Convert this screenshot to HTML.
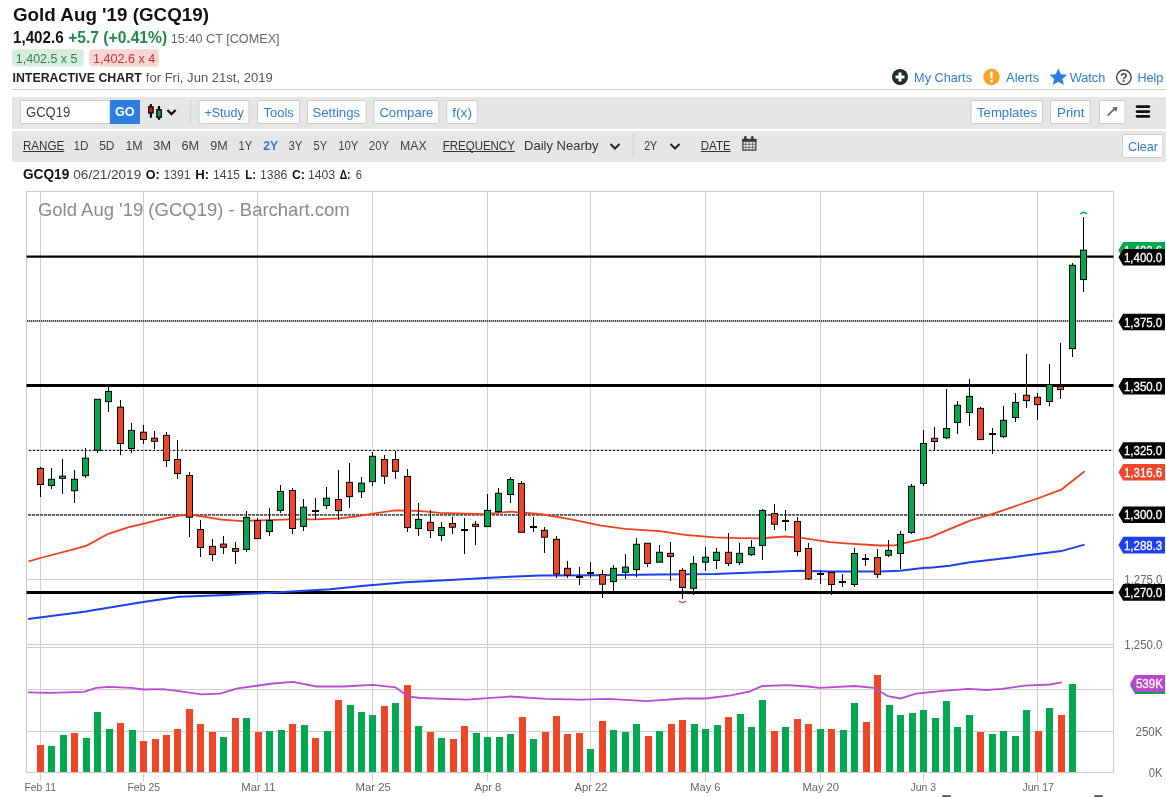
<!DOCTYPE html>
<html><head><meta charset="utf-8"><title>Gold Aug '19 (GCQ19)</title>
<style>
html,body{margin:0;padding:0;background:#fff;width:1166px;height:797px;overflow:hidden;}
svg{display:block;font-family:"Liberation Sans", sans-serif;will-change:transform;}
</style></head><body>
<svg width="1166" height="797" viewBox="0 0 1166 797">
<text x="13" y="20.7" font-size="19" fill="#111" font-weight="bold" textLength="196.0" lengthAdjust="spacingAndGlyphs">Gold Aug &#x27;19 (GCQ19)</text>
<text x="13" y="42.8" font-size="16" fill="#111" font-weight="bold" textLength="50.7" lengthAdjust="spacingAndGlyphs">1,402.6</text>
<text x="68.2" y="42.8" font-size="16" fill="#1e8a44" font-weight="bold" textLength="98.9" lengthAdjust="spacingAndGlyphs">+5.7 (+0.41%)</text>
<text x="170.8" y="42.5" font-size="13" fill="#666" textLength="108.8" lengthAdjust="spacingAndGlyphs">15:40 CT [COMEX]</text>
<rect x="12" y="49.2" width="71.7" height="17.4" fill="#d8ebdf" rx="3"/>
<text x="15.8" y="63" font-size="12.5" fill="#2e8b50" textLength="61.7" lengthAdjust="spacingAndGlyphs">1,402.5 x 5</text>
<rect x="89.2" y="49.2" width="69.5" height="17.4" fill="#f7d6d6" rx="3"/>
<text x="93.1" y="63" font-size="12.5" fill="#d0302a" textLength="62.1" lengthAdjust="spacingAndGlyphs">1,402.6 x 4</text>
<text x="12.5" y="82" font-size="12.3" fill="#222" font-weight="bold" textLength="129.2" lengthAdjust="spacingAndGlyphs">INTERACTIVE CHART</text>
<text x="145.8" y="82" font-size="13" fill="#555" textLength="126.9" lengthAdjust="spacingAndGlyphs">for Fri, Jun 21st, 2019</text>
<circle cx="900" cy="77" r="8" fill="#1f2e2b"/>
<rect x="895.5" y="75.5" width="9" height="3" fill="#fff"/>
<rect x="898.5" y="72.5" width="3" height="9" fill="#fff"/>
<text x="914.1" y="82.4" font-size="13" fill="#2f7bd6" textLength="57.9" lengthAdjust="spacingAndGlyphs">My Charts</text>
<circle cx="991.5" cy="77" r="8.2" fill="#f5a623"/>
<rect x="990.3" y="71.5" width="2.4" height="7" fill="#fff"/>
<rect x="990.3" y="80" width="2.4" height="2.4" fill="#fff"/>
<text x="1006.1" y="82.4" font-size="13" fill="#2f7bd6" textLength="33.1" lengthAdjust="spacingAndGlyphs">Alerts</text>
<path d="M1058.3,68.5 L1060.9,74.3 L1067,74.8 L1062.4,78.9 L1063.8,84.8 L1058.3,81.7 L1052.8,84.8 L1054.2,78.9 L1049.6,74.8 L1055.7,74.3 Z" fill="#2a7de1"/>
<text x="1069.7" y="82.4" font-size="13" fill="#2f7bd6" textLength="35.6" lengthAdjust="spacingAndGlyphs">Watch</text>
<circle cx="1123.9" cy="77.3" r="7.3" fill="none" stroke="#444" stroke-width="1.4"/>
<text x="1123.9" y="81.6" font-size="12.5" fill="#444" font-weight="bold" text-anchor="middle">?</text>
<text x="1137.4" y="82.4" font-size="13" fill="#2f7bd6" textLength="26.0" lengthAdjust="spacingAndGlyphs">Help</text>
<line x1="12" y1="89.5" x2="1166" y2="89.5" stroke="#cfcfcf" stroke-width="1"/>
<rect x="12" y="97" width="1154" height="32" fill="#e6e6e6"/>
<rect x="20.5" y="100.5" width="89.5" height="23" fill="#fff" stroke="#cfcfcf" stroke-width="1"/>
<text x="26" y="116.9" font-size="14.3" fill="#444" textLength="44.3" lengthAdjust="spacingAndGlyphs">GCQ19</text>
<rect x="110" y="100" width="30" height="24" fill="#2b7de0"/>
<text x="114.9" y="116" font-size="13" fill="#fff" font-weight="bold" textLength="19.7" lengthAdjust="spacingAndGlyphs">GO</text>
<line x1="150.9" y1="104.1" x2="150.9" y2="117.8" stroke="#111" stroke-width="2.2"/>
<rect x="148.7" y="106.9" width="4.4" height="6" fill="#c0221e" stroke="#111" stroke-width="1.4"/>
<line x1="159" y1="106" x2="159" y2="119.8" stroke="#111" stroke-width="2.2"/>
<rect x="156.8" y="109.8" width="4.5" height="7.5" fill="#17974a" stroke="#111" stroke-width="1.4"/>
<path d="M167.4,110 L171.5,114.2 L175.6,110" fill="none" stroke="#111" stroke-width="2.3"/>
<line x1="190.5" y1="100" x2="190.5" y2="124" stroke="#c8c8c8" stroke-width="1" stroke-dasharray="2,1"/>
<rect x="199.0" y="100.5" width="50.0" height="23" fill="#fff" stroke="#cfcfcf" stroke-width="1" rx="1.5"/>
<text x="204.4" y="117.1" font-size="13.7" fill="#2f7bd6" textLength="39.4" lengthAdjust="spacingAndGlyphs">+Study</text>
<rect x="257.5" y="100.5" width="42" height="23" fill="#fff" stroke="#cfcfcf" stroke-width="1" rx="1.5"/>
<text x="263.6" y="117.1" font-size="13.7" fill="#2f7bd6" textLength="30.1" lengthAdjust="spacingAndGlyphs">Tools</text>
<rect x="307.5" y="100.5" width="58.5" height="23" fill="#fff" stroke="#cfcfcf" stroke-width="1" rx="1.5"/>
<text x="312.5" y="117.1" font-size="13.7" fill="#2f7bd6" textLength="47.6" lengthAdjust="spacingAndGlyphs">Settings</text>
<rect x="374.0" y="100.5" width="64.80000000000001" height="23" fill="#fff" stroke="#cfcfcf" stroke-width="1" rx="1.5"/>
<text x="379.4" y="117.1" font-size="13.7" fill="#2f7bd6" textLength="54.0" lengthAdjust="spacingAndGlyphs">Compare</text>
<rect x="446.7" y="100.5" width="30.600000000000023" height="23" fill="#fff" stroke="#cfcfcf" stroke-width="1" rx="1.5"/>
<text x="452.2" y="117.1" font-size="13.7" fill="#2f7bd6" textLength="19.8" lengthAdjust="spacingAndGlyphs">f(x)</text>
<rect x="971.0" y="100.5" width="71.5" height="23" fill="#fff" stroke="#cfcfcf" stroke-width="1" rx="1.5"/>
<text x="977" y="117.1" font-size="13.7" fill="#2f7bd6" textLength="60.0" lengthAdjust="spacingAndGlyphs">Templates</text>
<rect x="1050.5" y="100.5" width="39.5" height="23" fill="#fff" stroke="#cfcfcf" stroke-width="1" rx="1.5"/>
<text x="1057" y="117.1" font-size="13.7" fill="#2f7bd6" textLength="27.4" lengthAdjust="spacingAndGlyphs">Print</text>
<rect x="1099.5" y="100.5" width="25.5" height="23" fill="#fff" stroke="#cfcfcf" stroke-width="1" rx="1.5"/>
<path d="M1107.6,115.6 L1114.6,108.6" fill="none" stroke="#666" stroke-width="1.7"/>
<path d="M1117.4,106.8 L1112.2,107.6 L1116.6,112 Z" fill="#666"/>
<line x1="1137" y1="106.6" x2="1148.9" y2="106.6" stroke="#111" stroke-width="2.6" stroke-linecap="round"/>
<line x1="1137" y1="111.6" x2="1148.9" y2="111.6" stroke="#111" stroke-width="2.6" stroke-linecap="round"/>
<line x1="1137" y1="116.4" x2="1148.9" y2="116.4" stroke="#111" stroke-width="2.6" stroke-linecap="round"/>
<rect x="12" y="131" width="1154" height="31" fill="#e6e6e6"/>
<text x="22.9" y="150.2" font-size="13" fill="#333" textLength="41.3" lengthAdjust="spacingAndGlyphs">RANGE</text>
<line x1="22.9" y1="151.5" x2="64.2" y2="151.5" stroke="#333" stroke-width="1"/>
<text x="73.4" y="150.2" font-size="13" fill="#444" textLength="15.1" lengthAdjust="spacingAndGlyphs">1D</text>
<text x="99.2" y="150.2" font-size="13" fill="#444" textLength="15.2" lengthAdjust="spacingAndGlyphs">5D</text>
<text x="125.4" y="150.2" font-size="13" fill="#444" textLength="17.3" lengthAdjust="spacingAndGlyphs">1M</text>
<text x="153.1" y="150.2" font-size="13" fill="#444" textLength="18.0" lengthAdjust="spacingAndGlyphs">3M</text>
<text x="181.5" y="150.2" font-size="13" fill="#444" textLength="17.7" lengthAdjust="spacingAndGlyphs">6M</text>
<text x="210.2" y="150.2" font-size="13" fill="#444" textLength="17.4" lengthAdjust="spacingAndGlyphs">9M</text>
<text x="238.6" y="150.2" font-size="13" fill="#444" textLength="13.7" lengthAdjust="spacingAndGlyphs">1Y</text>
<text x="263.3" y="150.2" font-size="13" fill="#2f7bd6" font-weight="bold" textLength="14.8" lengthAdjust="spacingAndGlyphs">2Y</text>
<text x="288.4" y="150.2" font-size="13" fill="#444" textLength="14.0" lengthAdjust="spacingAndGlyphs">3Y</text>
<text x="313.5" y="150.2" font-size="13" fill="#444" textLength="13.6" lengthAdjust="spacingAndGlyphs">5Y</text>
<text x="338.2" y="150.2" font-size="13" fill="#444" textLength="20.3" lengthAdjust="spacingAndGlyphs">10Y</text>
<text x="368.8" y="150.2" font-size="13" fill="#444" textLength="20.3" lengthAdjust="spacingAndGlyphs">20Y</text>
<text x="400.1" y="150.2" font-size="13" fill="#444" textLength="26.6" lengthAdjust="spacingAndGlyphs">MAX</text>
<text x="442.8" y="150.2" font-size="13" fill="#333" textLength="72.0" lengthAdjust="spacingAndGlyphs">FREQUENCY</text>
<line x1="442.8" y1="151.5" x2="514.8" y2="151.5" stroke="#333" stroke-width="1"/>
<text x="524.1" y="150.2" font-size="13" fill="#333" textLength="74.4" lengthAdjust="spacingAndGlyphs">Daily Nearby</text>
<text x="644.2" y="150.2" font-size="13" fill="#333" textLength="13.0" lengthAdjust="spacingAndGlyphs">2Y</text>
<text x="700.8" y="150.2" font-size="13" fill="#333" textLength="29.8" lengthAdjust="spacingAndGlyphs">DATE</text>
<line x1="700.8" y1="151.5" x2="730.6" y2="151.5" stroke="#333" stroke-width="1"/>
<path d="M610.5,144 L615,148.5 L619.5,144" fill="none" stroke="#222" stroke-width="2"/>
<path d="M670.5,144 L675,148.5 L679.5,144" fill="none" stroke="#222" stroke-width="2"/>
<line x1="633.5" y1="134" x2="633.5" y2="158" stroke="#c8c8c8" stroke-width="1" stroke-dasharray="2,1"/>
<rect x="742.9" y="139.5" width="12.9" height="10.6" fill="none" stroke="#333" stroke-width="1.2"/>
<rect x="742.3" y="138.9" width="14.1" height="2.9" fill="#333"/>
<line x1="745.7" y1="141" x2="745.7" y2="150" stroke="#666" stroke-width="0.8"/>
<line x1="749.2" y1="141" x2="749.2" y2="150" stroke="#666" stroke-width="0.8"/>
<line x1="752.5" y1="141" x2="752.5" y2="150" stroke="#666" stroke-width="0.8"/>
<line x1="743" y1="144.3" x2="755.6" y2="144.3" stroke="#666" stroke-width="0.8"/>
<line x1="743" y1="147.4" x2="755.6" y2="147.4" stroke="#666" stroke-width="0.8"/>
<rect x="744.2" y="136.1" width="2.4" height="3.8" rx="1" fill="#333"/>
<rect x="751.1" y="136.1" width="2.4" height="3.8" rx="1" fill="#333"/>
<rect x="1122.5" y="134.5" width="40.5" height="23" fill="#fff" stroke="#cfcfcf" stroke-width="1" rx="1.5"/>
<text x="1128" y="150.9" font-size="13" fill="#2f7bd6" textLength="30.0" lengthAdjust="spacingAndGlyphs">Clear</text>
<text x="23" y="178.7" font-size="14.8" fill="#111" font-weight="bold" textLength="46.3" lengthAdjust="spacingAndGlyphs">GCQ19</text>
<text x="73.3" y="178.7" font-size="13" fill="#444" textLength="67.9" lengthAdjust="spacingAndGlyphs">06/21/2019</text>
<text x="145.8" y="178.7" font-size="13" fill="#111" font-weight="bold" textLength="13.9" lengthAdjust="spacingAndGlyphs">O:</text>
<text x="163.4" y="178.7" font-size="13" fill="#444" textLength="27.2" lengthAdjust="spacingAndGlyphs">1391</text>
<text x="195.2" y="178.7" font-size="13" fill="#111" font-weight="bold" textLength="13.9" lengthAdjust="spacingAndGlyphs">H:</text>
<text x="213.1" y="178.7" font-size="13" fill="#444" textLength="26.9" lengthAdjust="spacingAndGlyphs">1415</text>
<text x="245.3" y="178.7" font-size="13" fill="#111" font-weight="bold" textLength="10.8" lengthAdjust="spacingAndGlyphs">L:</text>
<text x="260.1" y="178.7" font-size="13" fill="#444" textLength="27.1" lengthAdjust="spacingAndGlyphs">1386</text>
<text x="291.9" y="178.7" font-size="13" fill="#111" font-weight="bold" textLength="12.9" lengthAdjust="spacingAndGlyphs">C:</text>
<text x="307.9" y="178.7" font-size="13" fill="#444" textLength="27.2" lengthAdjust="spacingAndGlyphs">1403</text>
<text x="339.7" y="178.7" font-size="13" fill="#111" font-weight="bold" textLength="10.8" lengthAdjust="spacingAndGlyphs">Δ:</text>
<text x="355.8" y="178.7" font-size="13" fill="#444" textLength="6.2" lengthAdjust="spacingAndGlyphs">6</text>
<rect x="26.5" y="191.5" width="1087.0" height="581.0" fill="#fff" stroke="#cccccc" stroke-width="1"/>
<line x1="40.5" y1="191.5" x2="40.5" y2="781.5" stroke="#cfcfcf" stroke-width="1"/>
<line x1="143.5" y1="191.5" x2="143.5" y2="781.5" stroke="#cfcfcf" stroke-width="1"/>
<line x1="257.5" y1="191.5" x2="257.5" y2="781.5" stroke="#cfcfcf" stroke-width="1"/>
<line x1="372.5" y1="191.5" x2="372.5" y2="781.5" stroke="#cfcfcf" stroke-width="1"/>
<line x1="487.5" y1="191.5" x2="487.5" y2="781.5" stroke="#cfcfcf" stroke-width="1"/>
<line x1="590.5" y1="191.5" x2="590.5" y2="781.5" stroke="#cfcfcf" stroke-width="1"/>
<line x1="705.5" y1="191.5" x2="705.5" y2="781.5" stroke="#cfcfcf" stroke-width="1"/>
<line x1="820.5" y1="191.5" x2="820.5" y2="781.5" stroke="#cfcfcf" stroke-width="1"/>
<line x1="923.5" y1="191.5" x2="923.5" y2="781.5" stroke="#cfcfcf" stroke-width="1"/>
<line x1="1037.5" y1="191.5" x2="1037.5" y2="781.5" stroke="#cfcfcf" stroke-width="1"/>
<line x1="26.5" y1="579.5" x2="1113.5" y2="579.5" stroke="#cfcfcf" stroke-width="1"/>
<line x1="26.5" y1="644.5" x2="1113.5" y2="644.5" stroke="#cfcfcf" stroke-width="1"/>
<line x1="26.5" y1="647.5" x2="1113.5" y2="647.5" stroke="#cfcfcf" stroke-width="1"/>
<line x1="26.5" y1="689.5" x2="1113.5" y2="689.5" stroke="#cfcfcf" stroke-width="1"/>
<line x1="26.5" y1="731.5" x2="1113.5" y2="731.5" stroke="#cfcfcf" stroke-width="1"/>
<text x="37.9" y="216.4" font-size="18.5" fill="#8a8a8a" textLength="311.9" lengthAdjust="spacingAndGlyphs">Gold Aug &#x27;19 (GCQ19) - Barchart.com</text>
<rect x="37" y="745" width="7" height="27" fill="#ee4727"/>
<rect x="48" y="746" width="7" height="26" fill="#00a84f"/>
<rect x="60" y="735" width="7" height="37" fill="#00a84f"/>
<rect x="71" y="733" width="7" height="39" fill="#ee4727"/>
<rect x="83" y="738" width="7" height="34" fill="#00a84f"/>
<rect x="94" y="712" width="7" height="60" fill="#00a84f"/>
<rect x="106" y="729" width="7" height="43" fill="#00a84f"/>
<rect x="117" y="723" width="7" height="49" fill="#ee4727"/>
<rect x="129" y="730" width="7" height="42" fill="#00a84f"/>
<rect x="140" y="741" width="7" height="31" fill="#ee4727"/>
<rect x="152" y="739" width="7" height="33" fill="#ee4727"/>
<rect x="163" y="735" width="7" height="37" fill="#ee4727"/>
<rect x="174" y="729" width="7" height="43" fill="#ee4727"/>
<rect x="186" y="709" width="7" height="63" fill="#ee4727"/>
<rect x="197" y="724" width="7" height="48" fill="#ee4727"/>
<rect x="209" y="732" width="7" height="40" fill="#ee4727"/>
<rect x="220" y="737" width="7" height="35" fill="#00a84f"/>
<rect x="232" y="718" width="7" height="54" fill="#ee4727"/>
<rect x="243" y="718" width="7" height="54" fill="#00a84f"/>
<rect x="255" y="732" width="7" height="40" fill="#ee4727"/>
<rect x="266" y="731" width="7" height="41" fill="#00a84f"/>
<rect x="278" y="730" width="7" height="42" fill="#00a84f"/>
<rect x="289" y="724" width="7" height="48" fill="#ee4727"/>
<rect x="301" y="725" width="7" height="47" fill="#00a84f"/>
<rect x="312" y="738" width="7" height="34" fill="#ee4727"/>
<rect x="324" y="731" width="7" height="41" fill="#00a84f"/>
<rect x="335" y="700" width="7" height="72" fill="#ee4727"/>
<rect x="347" y="705" width="7" height="67" fill="#00a84f"/>
<rect x="358" y="712" width="7" height="60" fill="#00a84f"/>
<rect x="369" y="715" width="7" height="57" fill="#00a84f"/>
<rect x="381" y="706" width="7" height="66" fill="#ee4727"/>
<rect x="392" y="703" width="7" height="69" fill="#00a84f"/>
<rect x="404" y="685" width="7" height="87" fill="#ee4727"/>
<rect x="415" y="726" width="7" height="46" fill="#00a84f"/>
<rect x="427" y="732" width="7" height="40" fill="#ee4727"/>
<rect x="438" y="738" width="7" height="34" fill="#00a84f"/>
<rect x="450" y="739" width="7" height="33" fill="#ee4727"/>
<rect x="461" y="726" width="7" height="46" fill="#ee4727"/>
<rect x="473" y="733" width="7" height="39" fill="#00a84f"/>
<rect x="484" y="737" width="7" height="35" fill="#00a84f"/>
<rect x="496" y="737" width="7" height="35" fill="#00a84f"/>
<rect x="507" y="734" width="7" height="38" fill="#00a84f"/>
<rect x="519" y="717" width="7" height="55" fill="#ee4727"/>
<rect x="530" y="739" width="7" height="33" fill="#00a84f"/>
<rect x="542" y="732" width="7" height="40" fill="#ee4727"/>
<rect x="553" y="716" width="7" height="56" fill="#ee4727"/>
<rect x="564" y="734" width="7" height="38" fill="#ee4727"/>
<rect x="576" y="733" width="7" height="39" fill="#ee4727"/>
<rect x="587" y="749" width="7" height="23" fill="#00a84f"/>
<rect x="599" y="721" width="7" height="51" fill="#ee4727"/>
<rect x="610" y="730" width="7" height="42" fill="#00a84f"/>
<rect x="622" y="732" width="7" height="40" fill="#00a84f"/>
<rect x="633" y="724" width="7" height="48" fill="#00a84f"/>
<rect x="645" y="736" width="7" height="36" fill="#ee4727"/>
<rect x="656" y="731" width="7" height="41" fill="#00a84f"/>
<rect x="668" y="724" width="7" height="48" fill="#ee4727"/>
<rect x="679" y="720" width="7" height="52" fill="#ee4727"/>
<rect x="691" y="724" width="7" height="48" fill="#00a84f"/>
<rect x="702" y="729" width="7" height="43" fill="#00a84f"/>
<rect x="714" y="725" width="7" height="47" fill="#00a84f"/>
<rect x="725" y="717" width="7" height="55" fill="#ee4727"/>
<rect x="737" y="714" width="7" height="58" fill="#00a84f"/>
<rect x="748" y="727" width="7" height="45" fill="#00a84f"/>
<rect x="759" y="700" width="7" height="72" fill="#00a84f"/>
<rect x="771" y="731" width="7" height="41" fill="#ee4727"/>
<rect x="782" y="727" width="7" height="45" fill="#00a84f"/>
<rect x="794" y="719" width="7" height="53" fill="#ee4727"/>
<rect x="805" y="724" width="7" height="48" fill="#ee4727"/>
<rect x="817" y="729" width="7" height="43" fill="#00a84f"/>
<rect x="828" y="729" width="7" height="43" fill="#ee4727"/>
<rect x="840" y="730" width="7" height="42" fill="#00a84f"/>
<rect x="851" y="703" width="7" height="69" fill="#00a84f"/>
<rect x="863" y="722" width="7" height="50" fill="#ee4727"/>
<rect x="874" y="675" width="7" height="97" fill="#ee4727"/>
<rect x="886" y="705" width="7" height="67" fill="#00a84f"/>
<rect x="897" y="715" width="7" height="57" fill="#00a84f"/>
<rect x="909" y="713" width="7" height="59" fill="#00a84f"/>
<rect x="920" y="710" width="7" height="62" fill="#00a84f"/>
<rect x="932" y="718" width="7" height="54" fill="#00a84f"/>
<rect x="943" y="701" width="7" height="71" fill="#00a84f"/>
<rect x="954" y="727" width="7" height="45" fill="#00a84f"/>
<rect x="966" y="715" width="7" height="57" fill="#00a84f"/>
<rect x="977" y="732" width="7" height="40" fill="#ee4727"/>
<rect x="989" y="734" width="7" height="38" fill="#00a84f"/>
<rect x="1000" y="731" width="7" height="41" fill="#00a84f"/>
<rect x="1012" y="736" width="7" height="36" fill="#00a84f"/>
<rect x="1023" y="710" width="7" height="62" fill="#00a84f"/>
<rect x="1035" y="731" width="7" height="41" fill="#ee4727"/>
<rect x="1046" y="708" width="7" height="64" fill="#00a84f"/>
<rect x="1058" y="715" width="7" height="57" fill="#ee4727"/>
<rect x="1069" y="684" width="7" height="88" fill="#00a84f"/>
<polyline fill="none" stroke="#b84dd0" stroke-width="1.8" points="28.0,692.3 50.6,692.9 84.0,691.8 96.2,687.8 108.5,686.9 131.4,687.9 143.6,689.5 163.0,689.2 177.0,690.9 201.6,694.4 220.0,693.6 237.6,688.3 255.1,686.0 272.7,683.5 292.9,681.8 316.6,686.5 342.9,686.5 372.8,684.8 395.6,687.4 407.9,696.5 420.0,698.0 466.7,699.7 510.6,696.5 545.7,698.8 580.8,699.7 608.0,698.8 646.6,701.1 683.5,698.5 705.5,698.5 731.0,695.3 750.2,691.3 762.2,686.0 787.1,685.1 808.0,686.5 819.6,687.8 854.7,686.0 874.0,687.8 888.0,696.2 900.3,698.5 916.1,693.6 942.5,690.9 968.8,688.8 986.4,690.0 1002.0,688.8 1024.7,685.6 1049.9,684.5 1061.8,682.4"/>
<line x1="26.5" y1="256.6" x2="1113.5" y2="256.6" stroke="#000" stroke-width="2.2"/>
<line x1="27" y1="321" x2="1113" y2="321" stroke="#c4c4c4" stroke-width="2"/>
<line x1="27" y1="321" x2="1113" y2="321" stroke="#4a4a4a" stroke-width="2" stroke-dasharray="1,1"/>
<line x1="26.5" y1="385.5" x2="1113.5" y2="385.5" stroke="#000" stroke-width="3"/>
<line x1="27" y1="450.5" x2="1113" y2="450.5" stroke="#c4c4c4" stroke-width="1"/>
<line x1="29" y1="450.4" x2="1113" y2="450.4" stroke="#222" stroke-width="1.3" stroke-dasharray="2,2"/>
<line x1="28" y1="515" x2="1113" y2="515" stroke="#e4e4e4" stroke-width="1.8"/>
<line x1="28" y1="514.9" x2="1113" y2="514.9" stroke="#555" stroke-width="1.7" stroke-dasharray="3,1"/>
<line x1="26.5" y1="592.5" x2="1113.5" y2="592.5" stroke="#000" stroke-width="3"/>
<polyline fill="none" stroke="#f0401e" stroke-width="1.8" points="28.5,561.3 40.4,558.0 73.3,549.3 86.7,545.6 108.3,533.8 128.9,527.2 146.0,523.2 159.6,519.7 180.3,515.4 193.4,515.0 221.6,519.7 242.3,521.2 250.0,520.7 290.0,519.4 315.0,519.4 340.0,518.3 355.0,516.6 370.0,514.2 395.0,510.4 418.0,510.9 440.0,512.9 485.0,514.2 510.0,511.6 540.0,514.0 570.0,519.2 600.0,525.4 625.0,528.8 660.0,531.1 685.0,534.8 715.0,537.3 740.0,538.1 760.0,538.4 785.0,536.5 800.0,537.6 830.0,542.2 845.0,543.4 880.0,545.5 895.0,545.3 915.0,540.6 930.0,537.3 949.6,529.1 970.0,520.6 992.0,514.1 1014.8,506.3 1037.5,498.5 1061.3,489.6 1084.6,471.2"/>
<polyline fill="none" stroke="#1f3ff2" stroke-width="2" points="28.0,619.0 86.0,611.5 90.0,610.8 143.2,601.9 179.2,596.7 227.2,595.0 275.2,592.6 330.1,589.2 364.4,585.7 405.6,582.3 450.2,579.9 490.0,577.8 510.0,576.8 540.0,575.5 600.0,575.2 660.0,574.5 715.0,574.0 760.0,572.3 800.0,570.7 830.0,571.5 880.0,571.4 900.0,570.8 925.0,567.8 930.0,567.8 949.6,565.8 970.0,562.2 992.0,559.8 1015.0,556.9 1037.5,553.9 1061.3,551.1 1084.6,544.6"/>
<line x1="40.5" y1="467" x2="40.5" y2="497" stroke="#000" stroke-width="1"/>
<rect x="37.5" y="468.4" width="6" height="16.1" fill="#ee4727" stroke="#000" stroke-width="1"/>
<line x1="51.5" y1="468" x2="51.5" y2="489" stroke="#000" stroke-width="1"/>
<rect x="48.5" y="479.3" width="6" height="6.1" fill="#00a84f" stroke="#000" stroke-width="1"/>
<line x1="62.5" y1="459" x2="62.5" y2="494" stroke="#000" stroke-width="1"/>
<rect x="59.5" y="476.1" width="6" height="2.3" fill="#00a84f" stroke="#000" stroke-width="1"/>
<line x1="74.5" y1="470" x2="74.5" y2="503" stroke="#000" stroke-width="1"/>
<rect x="71.5" y="479.3" width="6" height="11.4" fill="#00a84f" stroke="#000" stroke-width="1"/>
<line x1="85.5" y1="448" x2="85.5" y2="478" stroke="#000" stroke-width="1"/>
<rect x="82.5" y="458.2" width="6" height="17.5" fill="#00a84f" stroke="#000" stroke-width="1"/>
<line x1="97.5" y1="399" x2="97.5" y2="453" stroke="#000" stroke-width="1"/>
<rect x="94.5" y="399.3" width="6" height="51.0" fill="#00a84f" stroke="#000" stroke-width="1"/>
<line x1="108.5" y1="386" x2="108.5" y2="412" stroke="#000" stroke-width="1"/>
<rect x="105.5" y="391.4" width="6" height="10.2" fill="#00a84f" stroke="#000" stroke-width="1"/>
<line x1="120.5" y1="400" x2="120.5" y2="455" stroke="#000" stroke-width="1"/>
<rect x="117.5" y="407.2" width="6" height="36.4" fill="#ee4727" stroke="#000" stroke-width="1"/>
<line x1="131.5" y1="423" x2="131.5" y2="453" stroke="#000" stroke-width="1"/>
<rect x="128.5" y="430.4" width="6" height="18.1" fill="#00a84f" stroke="#000" stroke-width="1"/>
<line x1="143.5" y1="425" x2="143.5" y2="444" stroke="#000" stroke-width="1"/>
<rect x="140.5" y="432.2" width="6" height="7.3" fill="#ee4727" stroke="#000" stroke-width="1"/>
<line x1="154.5" y1="431" x2="154.5" y2="449" stroke="#000" stroke-width="1"/>
<rect x="151.5" y="438.2" width="6" height="3.1" fill="#ee4727" stroke="#000" stroke-width="1"/>
<line x1="166.5" y1="432" x2="166.5" y2="467" stroke="#000" stroke-width="1"/>
<rect x="163.5" y="435.4" width="6" height="25.0" fill="#ee4727" stroke="#000" stroke-width="1"/>
<line x1="177.5" y1="440" x2="177.5" y2="479" stroke="#000" stroke-width="1"/>
<rect x="174.5" y="459.5" width="6" height="14.1" fill="#ee4727" stroke="#000" stroke-width="1"/>
<line x1="189.5" y1="472" x2="189.5" y2="537" stroke="#000" stroke-width="1"/>
<rect x="186.5" y="475.5" width="6" height="41.7" fill="#ee4727" stroke="#000" stroke-width="1"/>
<line x1="200.5" y1="520" x2="200.5" y2="557" stroke="#000" stroke-width="1"/>
<rect x="197.5" y="529.5" width="6" height="18.0" fill="#ee4727" stroke="#000" stroke-width="1"/>
<line x1="212.5" y1="539" x2="212.5" y2="561" stroke="#000" stroke-width="1"/>
<rect x="209.5" y="546.4" width="6" height="8.1" fill="#ee4727" stroke="#000" stroke-width="1"/>
<line x1="223.5" y1="536" x2="223.5" y2="554" stroke="#000" stroke-width="1"/>
<rect x="220.5" y="544.1" width="6" height="3.2" fill="#ee4727" stroke="#000" stroke-width="1"/>
<line x1="235.5" y1="542" x2="235.5" y2="564" stroke="#000" stroke-width="1"/>
<rect x="232.5" y="548.5" width="6" height="2.8" fill="#ee4727" stroke="#000" stroke-width="1"/>
<line x1="246.5" y1="511" x2="246.5" y2="552" stroke="#000" stroke-width="1"/>
<rect x="243.5" y="517.4" width="6" height="32.0" fill="#00a84f" stroke="#000" stroke-width="1"/>
<line x1="257.5" y1="518" x2="257.5" y2="539" stroke="#000" stroke-width="1"/>
<rect x="254.5" y="520.4" width="6" height="18.2" fill="#ee4727" stroke="#000" stroke-width="1"/>
<line x1="269.5" y1="508" x2="269.5" y2="536" stroke="#000" stroke-width="1"/>
<rect x="266.5" y="520.4" width="6" height="11.2" fill="#00a84f" stroke="#000" stroke-width="1"/>
<line x1="280.5" y1="485" x2="280.5" y2="513" stroke="#000" stroke-width="1"/>
<rect x="277.5" y="491.4" width="6" height="19.0" fill="#00a84f" stroke="#000" stroke-width="1"/>
<line x1="292.5" y1="488" x2="292.5" y2="534" stroke="#000" stroke-width="1"/>
<rect x="289.5" y="490.5" width="6" height="38.0" fill="#ee4727" stroke="#000" stroke-width="1"/>
<line x1="303.5" y1="499" x2="303.5" y2="531" stroke="#000" stroke-width="1"/>
<rect x="300.5" y="507.2" width="6" height="19.2" fill="#00a84f" stroke="#000" stroke-width="1"/>
<line x1="315.5" y1="498" x2="315.5" y2="520" stroke="#000" stroke-width="1"/>
<rect x="312.0" y="510" width="7" height="2" fill="#000"/>
<line x1="326.5" y1="487" x2="326.5" y2="509" stroke="#000" stroke-width="1"/>
<rect x="323.5" y="498.2" width="6" height="7.3" fill="#00a84f" stroke="#000" stroke-width="1"/>
<line x1="338.5" y1="470" x2="338.5" y2="520" stroke="#000" stroke-width="1"/>
<rect x="335.5" y="499.5" width="6" height="11.1" fill="#ee4727" stroke="#000" stroke-width="1"/>
<line x1="349.5" y1="463" x2="349.5" y2="508" stroke="#000" stroke-width="1"/>
<rect x="346.5" y="482.4" width="6" height="14.2" fill="#ee4727" stroke="#000" stroke-width="1"/>
<line x1="361.5" y1="477" x2="361.5" y2="498" stroke="#000" stroke-width="1"/>
<rect x="358.5" y="483.2" width="6" height="8.5" fill="#00a84f" stroke="#000" stroke-width="1"/>
<line x1="372.5" y1="452" x2="372.5" y2="486" stroke="#000" stroke-width="1"/>
<rect x="369.5" y="456.3" width="6" height="25.3" fill="#00a84f" stroke="#000" stroke-width="1"/>
<line x1="384.5" y1="455" x2="384.5" y2="484" stroke="#000" stroke-width="1"/>
<rect x="381.5" y="459.6" width="6" height="16.6" fill="#ee4727" stroke="#000" stroke-width="1"/>
<line x1="395.5" y1="451" x2="395.5" y2="479" stroke="#000" stroke-width="1"/>
<rect x="392.5" y="459.6" width="6" height="11.7" fill="#ee4727" stroke="#000" stroke-width="1"/>
<line x1="407.5" y1="469" x2="407.5" y2="532" stroke="#000" stroke-width="1"/>
<rect x="404.5" y="476.4" width="6" height="51.2" fill="#ee4727" stroke="#000" stroke-width="1"/>
<line x1="418.5" y1="503" x2="418.5" y2="536" stroke="#000" stroke-width="1"/>
<rect x="415.5" y="519.4" width="6" height="9.1" fill="#00a84f" stroke="#000" stroke-width="1"/>
<line x1="430.5" y1="510" x2="430.5" y2="538" stroke="#000" stroke-width="1"/>
<rect x="427.5" y="522.3" width="6" height="8.2" fill="#ee4727" stroke="#000" stroke-width="1"/>
<line x1="441.5" y1="522" x2="441.5" y2="541" stroke="#000" stroke-width="1"/>
<rect x="438.5" y="527.6" width="6" height="7.8" fill="#00a84f" stroke="#000" stroke-width="1"/>
<line x1="452.5" y1="517" x2="452.5" y2="534" stroke="#000" stroke-width="1"/>
<rect x="449.5" y="523.5" width="6" height="3.7" fill="#ee4727" stroke="#000" stroke-width="1"/>
<line x1="464.5" y1="518" x2="464.5" y2="554" stroke="#000" stroke-width="1"/>
<rect x="461.0" y="529" width="7" height="2" fill="#000"/>
<line x1="475.5" y1="521" x2="475.5" y2="545" stroke="#000" stroke-width="1"/>
<rect x="472.5" y="524.3" width="6" height="2.1" fill="#ee4727" stroke="#000" stroke-width="1"/>
<line x1="487.5" y1="494" x2="487.5" y2="527" stroke="#000" stroke-width="1"/>
<rect x="484.5" y="510.4" width="6" height="16.2" fill="#00a84f" stroke="#000" stroke-width="1"/>
<line x1="498.5" y1="488" x2="498.5" y2="513" stroke="#000" stroke-width="1"/>
<rect x="495.5" y="493.3" width="6" height="18.3" fill="#00a84f" stroke="#000" stroke-width="1"/>
<line x1="510.5" y1="477" x2="510.5" y2="503" stroke="#000" stroke-width="1"/>
<rect x="507.5" y="479.5" width="6" height="15.0" fill="#00a84f" stroke="#000" stroke-width="1"/>
<line x1="521.5" y1="481" x2="521.5" y2="532" stroke="#000" stroke-width="1"/>
<rect x="518.5" y="483.5" width="6" height="48.8" fill="#ee4727" stroke="#000" stroke-width="1"/>
<line x1="533.5" y1="517" x2="533.5" y2="532" stroke="#000" stroke-width="1"/>
<rect x="530.0" y="526" width="7" height="2" fill="#000"/>
<line x1="544.5" y1="527" x2="544.5" y2="553" stroke="#000" stroke-width="1"/>
<rect x="541.5" y="530.3" width="6" height="6.9" fill="#ee4727" stroke="#000" stroke-width="1"/>
<line x1="556.5" y1="536" x2="556.5" y2="578" stroke="#000" stroke-width="1"/>
<rect x="553.5" y="539.3" width="6" height="34.7" fill="#ee4727" stroke="#000" stroke-width="1"/>
<line x1="567.5" y1="561" x2="567.5" y2="578" stroke="#000" stroke-width="1"/>
<rect x="564.5" y="568.3" width="6" height="6.9" fill="#ee4727" stroke="#000" stroke-width="1"/>
<line x1="579.5" y1="567" x2="579.5" y2="585" stroke="#000" stroke-width="1"/>
<rect x="576.0" y="576" width="7" height="2" fill="#000"/>
<line x1="590.5" y1="562" x2="590.5" y2="578" stroke="#000" stroke-width="1"/>
<rect x="587.0" y="572" width="7" height="2" fill="#000"/>
<line x1="602.5" y1="570" x2="602.5" y2="598" stroke="#000" stroke-width="1"/>
<rect x="599.5" y="574.5" width="6" height="9.7" fill="#ee4727" stroke="#000" stroke-width="1"/>
<line x1="613.5" y1="565" x2="613.5" y2="591" stroke="#000" stroke-width="1"/>
<rect x="610.5" y="568.3" width="6" height="13.3" fill="#00a84f" stroke="#000" stroke-width="1"/>
<line x1="625.5" y1="554" x2="625.5" y2="579" stroke="#000" stroke-width="1"/>
<rect x="622.5" y="567.1" width="6" height="5.2" fill="#00a84f" stroke="#000" stroke-width="1"/>
<line x1="636.5" y1="538" x2="636.5" y2="577" stroke="#000" stroke-width="1"/>
<rect x="633.5" y="544.3" width="6" height="25.3" fill="#00a84f" stroke="#000" stroke-width="1"/>
<line x1="647.5" y1="543" x2="647.5" y2="567" stroke="#000" stroke-width="1"/>
<rect x="644.5" y="543.3" width="6" height="20.1" fill="#ee4727" stroke="#000" stroke-width="1"/>
<line x1="659.5" y1="545" x2="659.5" y2="562" stroke="#000" stroke-width="1"/>
<rect x="656.5" y="552.3" width="6" height="9.9" fill="#00a84f" stroke="#000" stroke-width="1"/>
<line x1="670.5" y1="542" x2="670.5" y2="581" stroke="#000" stroke-width="1"/>
<rect x="667.5" y="553.3" width="6" height="3.1" fill="#ee4727" stroke="#000" stroke-width="1"/>
<line x1="682.5" y1="568" x2="682.5" y2="599" stroke="#000" stroke-width="1"/>
<rect x="679.5" y="570.4" width="6" height="17.1" fill="#ee4727" stroke="#000" stroke-width="1"/>
<line x1="693.5" y1="556" x2="693.5" y2="595" stroke="#000" stroke-width="1"/>
<rect x="690.5" y="563.7" width="6" height="24.6" fill="#00a84f" stroke="#000" stroke-width="1"/>
<line x1="705.5" y1="547" x2="705.5" y2="571" stroke="#000" stroke-width="1"/>
<rect x="702.5" y="557.2" width="6" height="5.0" fill="#00a84f" stroke="#000" stroke-width="1"/>
<line x1="716.5" y1="548" x2="716.5" y2="569" stroke="#000" stroke-width="1"/>
<rect x="713.5" y="552.3" width="6" height="8.1" fill="#00a84f" stroke="#000" stroke-width="1"/>
<line x1="728.5" y1="533" x2="728.5" y2="566" stroke="#000" stroke-width="1"/>
<rect x="725.5" y="552.3" width="6" height="11.1" fill="#ee4727" stroke="#000" stroke-width="1"/>
<line x1="739.5" y1="543" x2="739.5" y2="565" stroke="#000" stroke-width="1"/>
<rect x="736.5" y="553.3" width="6" height="9.3" fill="#00a84f" stroke="#000" stroke-width="1"/>
<line x1="751.5" y1="540" x2="751.5" y2="556" stroke="#000" stroke-width="1"/>
<rect x="748.5" y="547.4" width="6" height="7.3" fill="#00a84f" stroke="#000" stroke-width="1"/>
<line x1="762.5" y1="509" x2="762.5" y2="560" stroke="#000" stroke-width="1"/>
<rect x="759.5" y="510.4" width="6" height="35.0" fill="#00a84f" stroke="#000" stroke-width="1"/>
<line x1="774.5" y1="504" x2="774.5" y2="530" stroke="#000" stroke-width="1"/>
<rect x="771.5" y="513.6" width="6" height="10.6" fill="#ee4727" stroke="#000" stroke-width="1"/>
<line x1="785.5" y1="510" x2="785.5" y2="531" stroke="#000" stroke-width="1"/>
<rect x="782.0" y="520" width="7" height="2" fill="#000"/>
<line x1="797.5" y1="517" x2="797.5" y2="556" stroke="#000" stroke-width="1"/>
<rect x="794.5" y="521.5" width="6" height="30.0" fill="#ee4727" stroke="#000" stroke-width="1"/>
<line x1="808.5" y1="543" x2="808.5" y2="580" stroke="#000" stroke-width="1"/>
<rect x="805.5" y="548.4" width="6" height="30.5" fill="#ee4727" stroke="#000" stroke-width="1"/>
<line x1="820.5" y1="570" x2="820.5" y2="584" stroke="#000" stroke-width="1"/>
<rect x="817.0" y="573" width="7" height="2" fill="#000"/>
<line x1="831.5" y1="572" x2="831.5" y2="595" stroke="#000" stroke-width="1"/>
<rect x="828.5" y="572.4" width="6" height="12.1" fill="#ee4727" stroke="#000" stroke-width="1"/>
<line x1="842.5" y1="574" x2="842.5" y2="587" stroke="#000" stroke-width="1"/>
<rect x="839.0" y="581" width="7" height="2" fill="#000"/>
<line x1="854.5" y1="548" x2="854.5" y2="587" stroke="#000" stroke-width="1"/>
<rect x="851.5" y="553.5" width="6" height="31.0" fill="#00a84f" stroke="#000" stroke-width="1"/>
<line x1="865.5" y1="554" x2="865.5" y2="566" stroke="#000" stroke-width="1"/>
<rect x="862.0" y="558" width="7" height="2" fill="#000"/>
<line x1="877.5" y1="549" x2="877.5" y2="578" stroke="#000" stroke-width="1"/>
<rect x="874.5" y="557.6" width="6" height="16.8" fill="#ee4727" stroke="#000" stroke-width="1"/>
<line x1="888.5" y1="540" x2="888.5" y2="557" stroke="#000" stroke-width="1"/>
<rect x="885.5" y="550.4" width="6" height="4.9" fill="#00a84f" stroke="#000" stroke-width="1"/>
<line x1="900.5" y1="531" x2="900.5" y2="569" stroke="#000" stroke-width="1"/>
<rect x="897.5" y="534.4" width="6" height="19.1" fill="#00a84f" stroke="#000" stroke-width="1"/>
<line x1="911.5" y1="484" x2="911.5" y2="534" stroke="#000" stroke-width="1"/>
<rect x="908.5" y="486.3" width="6" height="46.1" fill="#00a84f" stroke="#000" stroke-width="1"/>
<line x1="923.5" y1="430" x2="923.5" y2="486" stroke="#000" stroke-width="1"/>
<rect x="920.5" y="443.5" width="6" height="39.9" fill="#00a84f" stroke="#000" stroke-width="1"/>
<line x1="934.5" y1="427" x2="934.5" y2="450" stroke="#000" stroke-width="1"/>
<rect x="931.5" y="438.3" width="6" height="3.2" fill="#ee4727" stroke="#000" stroke-width="1"/>
<line x1="946.5" y1="389" x2="946.5" y2="439" stroke="#000" stroke-width="1"/>
<rect x="943.5" y="428.5" width="6" height="9.3" fill="#00a84f" stroke="#000" stroke-width="1"/>
<line x1="957.5" y1="401" x2="957.5" y2="434" stroke="#000" stroke-width="1"/>
<rect x="954.5" y="405.3" width="6" height="17.1" fill="#00a84f" stroke="#000" stroke-width="1"/>
<line x1="969.5" y1="379" x2="969.5" y2="426" stroke="#000" stroke-width="1"/>
<rect x="966.5" y="396.4" width="6" height="16.1" fill="#00a84f" stroke="#000" stroke-width="1"/>
<line x1="980.5" y1="407" x2="980.5" y2="440" stroke="#000" stroke-width="1"/>
<rect x="977.5" y="408.4" width="6" height="31.2" fill="#ee4727" stroke="#000" stroke-width="1"/>
<line x1="992.5" y1="428" x2="992.5" y2="454" stroke="#000" stroke-width="1"/>
<rect x="989.0" y="433" width="7" height="2" fill="#000"/>
<line x1="1003.5" y1="406" x2="1003.5" y2="438" stroke="#000" stroke-width="1"/>
<rect x="1000.5" y="420.3" width="6" height="16.3" fill="#00a84f" stroke="#000" stroke-width="1"/>
<line x1="1015.5" y1="393" x2="1015.5" y2="422" stroke="#000" stroke-width="1"/>
<rect x="1012.5" y="402.4" width="6" height="15.1" fill="#00a84f" stroke="#000" stroke-width="1"/>
<line x1="1026.5" y1="354" x2="1026.5" y2="408" stroke="#000" stroke-width="1"/>
<rect x="1023.5" y="395.2" width="6" height="5.4" fill="#ee4727" stroke="#000" stroke-width="1"/>
<line x1="1037.5" y1="393" x2="1037.5" y2="420" stroke="#000" stroke-width="1"/>
<rect x="1034.5" y="397.3" width="6" height="7.3" fill="#ee4727" stroke="#000" stroke-width="1"/>
<line x1="1049.5" y1="364" x2="1049.5" y2="406" stroke="#000" stroke-width="1"/>
<rect x="1046.5" y="384.5" width="6" height="17.0" fill="#00a84f" stroke="#000" stroke-width="1"/>
<line x1="1060.5" y1="343" x2="1060.5" y2="399" stroke="#000" stroke-width="1"/>
<rect x="1057.5" y="386.4" width="6" height="3.2" fill="#ee4727" stroke="#000" stroke-width="1"/>
<line x1="1072.5" y1="263" x2="1072.5" y2="357" stroke="#000" stroke-width="1"/>
<rect x="1069.5" y="265.3" width="6" height="83.3" fill="#00a84f" stroke="#000" stroke-width="1"/>
<line x1="1083.5" y1="217" x2="1083.5" y2="292" stroke="#000" stroke-width="1"/>
<rect x="1080.5" y="250.2" width="6" height="29.4" fill="#00a84f" stroke="#000" stroke-width="1"/>
<path d="M679,601 Q682.5,604 686,601" fill="none" stroke="#ee4727" stroke-width="1.3"/>
<path d="M1080,214 Q1083.5,210.5 1087,214" fill="none" stroke="#00a84f" stroke-width="1.3"/>
<text x="24.5" y="791" font-size="11.3" fill="#666" textLength="31.5" lengthAdjust="spacingAndGlyphs">Feb 11</text>
<text x="127.4" y="791" font-size="11.3" fill="#666" textLength="32.8" lengthAdjust="spacingAndGlyphs">Feb 25</text>
<text x="241.3" y="791" font-size="11.3" fill="#666" textLength="34.3" lengthAdjust="spacingAndGlyphs">Mar 11</text>
<text x="355.5" y="791" font-size="11.3" fill="#666" textLength="35.3" lengthAdjust="spacingAndGlyphs">Mar 25</text>
<text x="474.5" y="791" font-size="11.3" fill="#666" textLength="26.8" lengthAdjust="spacingAndGlyphs">Apr 8</text>
<text x="574.4" y="791" font-size="11.3" fill="#666" textLength="33.2" lengthAdjust="spacingAndGlyphs">Apr 22</text>
<text x="690.3" y="791" font-size="11.3" fill="#666" textLength="30.2" lengthAdjust="spacingAndGlyphs">May 6</text>
<text x="802.5" y="791" font-size="11.3" fill="#666" textLength="36.3" lengthAdjust="spacingAndGlyphs">May 20</text>
<text x="910.5" y="791" font-size="11.3" fill="#666" textLength="25.7" lengthAdjust="spacingAndGlyphs">Jun 3</text>
<text x="1022.4" y="791" font-size="11.3" fill="#666" textLength="31.5" lengthAdjust="spacingAndGlyphs">Jun 17</text>
<rect x="1094.2" y="795.2" width="8.5" height="2" fill="#555"/>
<rect x="942.2" y="795.2" width="8.6" height="2" fill="#555"/>
<text x="1124.3" y="648.5" font-size="12" fill="#666" textLength="38.2" lengthAdjust="spacingAndGlyphs">1,250.0</text>
<text x="1124.3" y="584" font-size="12" fill="#666" textLength="38.2" lengthAdjust="spacingAndGlyphs">1,275.0</text>
<text x="1135.5" y="736" font-size="12" fill="#666" textLength="27.0" lengthAdjust="spacingAndGlyphs">250K</text>
<text x="1148.7" y="777.3" font-size="12" fill="#666" textLength="13.8" lengthAdjust="spacingAndGlyphs">0K</text>
<path d="M1118.4,250.3 L1123.2,242.0 L1165,242.0 L1165,258.6 L1123.2,258.6 Z" fill="#00a84f"/>
<text x="1124" y="254.9" font-size="12.3" fill="#fff" textLength="38.2" lengthAdjust="spacingAndGlyphs" stroke="#fff" stroke-width="0.3">1,402.6</text>
<path d="M1118.4,257.2 L1123.2,248.9 L1165,248.9 L1165,265.5 L1123.2,265.5 Z" fill="#000"/>
<text x="1124" y="261.8" font-size="12.3" fill="#fff" textLength="38.2" lengthAdjust="spacingAndGlyphs" stroke="#fff" stroke-width="0.3">1,400.0</text>
<path d="M1118.4,322.0 L1123.2,313.7 L1165,313.7 L1165,330.3 L1123.2,330.3 Z" fill="#000"/>
<text x="1124" y="326.6" font-size="12.3" fill="#fff" textLength="38.2" lengthAdjust="spacingAndGlyphs" stroke="#fff" stroke-width="0.3">1,375.0</text>
<path d="M1118.4,386.3 L1123.2,378.0 L1165,378.0 L1165,394.6 L1123.2,394.6 Z" fill="#000"/>
<text x="1124" y="390.90000000000003" font-size="12.3" fill="#fff" textLength="38.2" lengthAdjust="spacingAndGlyphs" stroke="#fff" stroke-width="0.3">1,350.0</text>
<path d="M1118.4,450.5 L1123.2,442.2 L1165,442.2 L1165,458.8 L1123.2,458.8 Z" fill="#000"/>
<text x="1124" y="455.1" font-size="12.3" fill="#fff" textLength="38.2" lengthAdjust="spacingAndGlyphs" stroke="#fff" stroke-width="0.3">1,325.0</text>
<path d="M1118.4,472.3 L1123.2,464.0 L1165,464.0 L1165,480.6 L1123.2,480.6 Z" fill="#ee4727"/>
<text x="1124" y="476.90000000000003" font-size="12.3" fill="#fff" textLength="38.2" lengthAdjust="spacingAndGlyphs" stroke="#fff" stroke-width="0.3">1,316.6</text>
<path d="M1118.4,514.8 L1123.2,506.5 L1165,506.5 L1165,523.1 L1123.2,523.1 Z" fill="#000"/>
<text x="1124" y="519.4" font-size="12.3" fill="#fff" textLength="38.2" lengthAdjust="spacingAndGlyphs" stroke="#fff" stroke-width="0.3">1,300.0</text>
<path d="M1118.4,545.1 L1123.2,536.8 L1165,536.8 L1165,553.4 L1123.2,553.4 Z" fill="#1f3ff2"/>
<text x="1124" y="549.7" font-size="12.3" fill="#fff" textLength="38.2" lengthAdjust="spacingAndGlyphs" stroke="#fff" stroke-width="0.3">1,288.3</text>
<path d="M1118.4,592.4 L1123.2,584.1 L1165,584.1 L1165,600.7 L1123.2,600.7 Z" fill="#000"/>
<text x="1124" y="597.0" font-size="12.3" fill="#fff" textLength="38.2" lengthAdjust="spacingAndGlyphs" stroke="#fff" stroke-width="0.3">1,270.0</text>
<path d="M1130.2,685.5 L1135.1,677.0 L1165,677.0 L1165,694.0 L1135.1,694.0 Z" fill="#00a84f"/>
<text x="1135.9" y="689.9" font-size="12.3" fill="#fff" textLength="27.0" lengthAdjust="spacingAndGlyphs" stroke="#fff" stroke-width="0.3">539K</text>
<path d="M1130.2,683.5 L1135.1,675.0 L1165,675.0 L1165,692.0 L1135.1,692.0 Z" fill="#b847cc"/>
<text x="1135.9" y="687.9" font-size="12.3" fill="#fff" textLength="27.0" lengthAdjust="spacingAndGlyphs" stroke="#fff" stroke-width="0.3">539K</text>
</svg>
</body></html>
